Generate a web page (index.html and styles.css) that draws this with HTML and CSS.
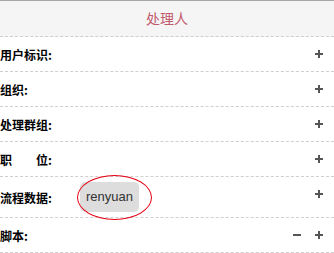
FILE: index.html
```html
<!DOCTYPE html>
<html lang="zh-CN">
<head>
    <meta charset="UTF-8">
    <title>处理人</title>
    <link rel="stylesheet" href="styles.css">
</head>
<body>
    <div class="panel">
        <div class="panel-title">处理人</div>

        <div class="row">
            <div class="label">用户标识:</div>
            <div class="values"></div>
            <div class="actions">
                <svg class="icon" viewBox="0 0 8 8"><path d="M0 4H8M4 0V8"/></svg>
            </div>
        </div>

        <div class="row">
            <div class="label">组织:</div>
            <div class="values"></div>
            <div class="actions">
                <svg class="icon" viewBox="0 0 8 8"><path d="M0 4H8M4 0V8"/></svg>
            </div>
        </div>

        <div class="row">
            <div class="label">处理群组:</div>
            <div class="values"></div>
            <div class="actions">
                <svg class="icon" viewBox="0 0 8 8"><path d="M0 4H8M4 0V8"/></svg>
            </div>
        </div>

        <div class="row">
            <div class="label">职&emsp;&emsp;位:</div>
            <div class="values"></div>
            <div class="actions">
                <svg class="icon" viewBox="0 0 8 8"><path d="M0 4H8M4 0V8"/></svg>
            </div>
        </div>

        <div class="row">
            <div class="label">流程数据:</div>
            <div class="values">
                <span class="chip">renyuan<span class="mark"></span></span>
            </div>
            <div class="actions">
                <svg class="icon" viewBox="0 0 8 8"><path d="M0 4H8M4 0V8"/></svg>
            </div>
        </div>

        <div class="row">
            <div class="label">脚本:</div>
            <div class="values"></div>
            <div class="actions">
                <svg class="icon" viewBox="0 0 8 8"><path d="M0 4H8"/></svg>
                <svg class="icon" viewBox="0 0 8 8"><path d="M0 4H8M4 0V8"/></svg>
            </div>
        </div>
    </div>
</body>
</html>
```

FILE: styles.css
```css
body {
    margin: 0;
    background: #ffffff;
    font-family: "Noto Sans CJK SC", "Liberation Sans", sans-serif;
}

.panel {
    border-top: 1px solid #a6a6a6;
}

.panel-title {
    height: 35px;
    line-height: 35px;
    background: #f5f5f5;
    border-bottom: 1px dashed #cfcfcf;
    text-align: center;
    font-size: 14px;
    color: #c25a6e;
}

.row {
    display: flex;
    align-items: center;
    min-height: 34px;
    padding-right: 11px;
    border-bottom: 1px dashed #cfcfcf;
}

.label {
    width: 80px;
    flex-shrink: 0;
    font-size: 12px;
    font-weight: bold;
    color: #000000;
}

.values {
    flex: 1;
}

.chip {
    position: relative;
    display: inline-block;
    margin: 5px 0;
    padding: 0 6px;
    height: 30px;
    line-height: 30px;
    background: #dddddd;
    border-radius: 5px;
    font-family: "Liberation Sans", sans-serif;
    font-size: 13px;
    color: #333333;
}

.mark {
    position: absolute;
    left: -3px;
    top: -7px;
    width: 73px;
    height: 43px;
    border: 1px solid #e60012;
    border-radius: 50%;
}

.actions {
    align-self: flex-start;
    height: 34px;
    display: flex;
    align-items: center;
    gap: 14px;
}

.icon {
    width: 8px;
    height: 8px;
    stroke: #555555;
    stroke-width: 2;
    fill: none;
}
```
